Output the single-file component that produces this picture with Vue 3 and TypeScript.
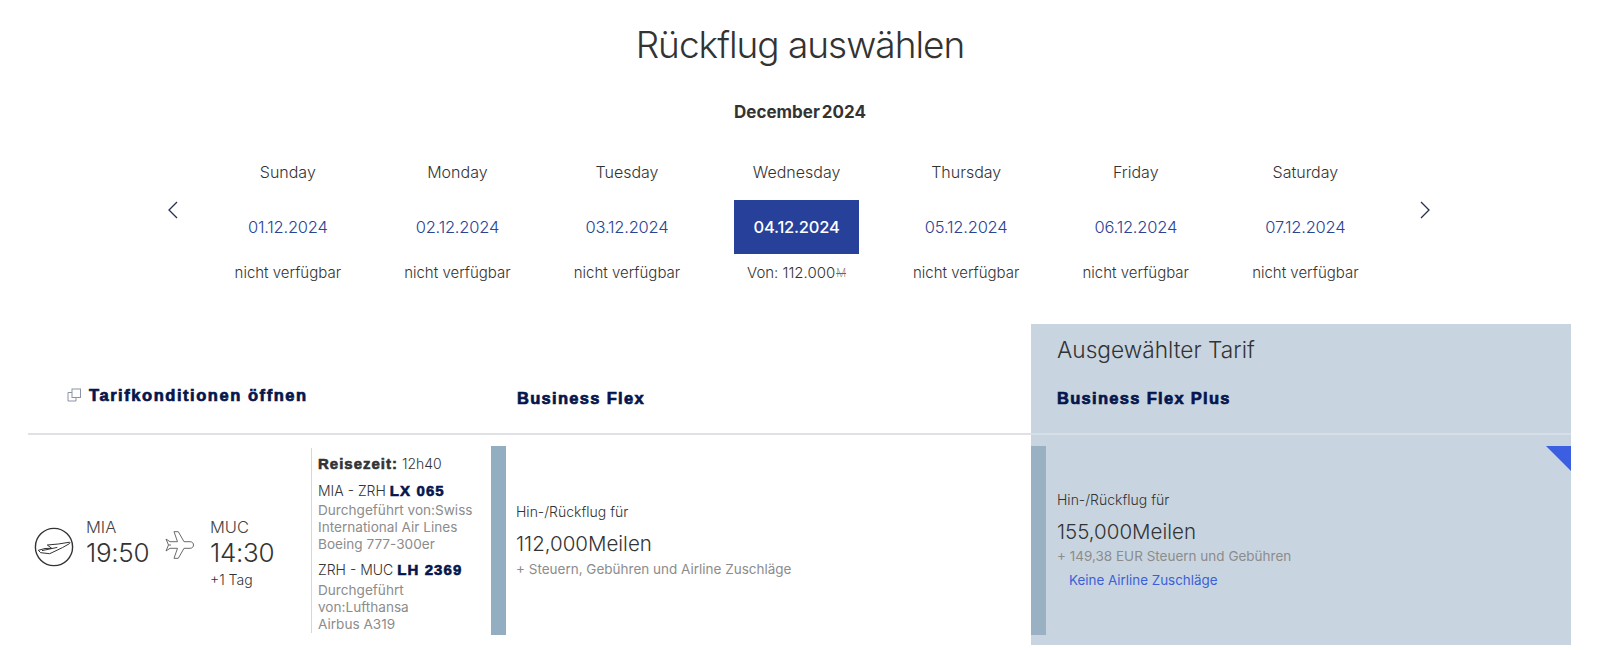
<script setup lang="ts">
interface Day { name: string; date: string; note: string; selected?: boolean }
const days: Day[] = [
  { name: 'Sunday', date: '01.12.2024', note: 'nicht verfügbar' },
  { name: 'Monday', date: '02.12.2024', note: 'nicht verfügbar' },
  { name: 'Tuesday', date: '03.12.2024', note: 'nicht verfügbar' },
  { name: 'Wednesday', date: '04.12.2024', note: 'Von: 112.000', selected: true },
  { name: 'Thursday', date: '05.12.2024', note: 'nicht verfügbar' },
  { name: 'Friday', date: '06.12.2024', note: 'nicht verfügbar' },
  { name: 'Saturday', date: '07.12.2024', note: 'nicht verfügbar' },
]
</script>

<template>
  <div class="page">
    <h1 class="title">Rückflug auswählen</h1>
    <div class="month">December 2024</div>

    <div class="calendar">
      <div class="arrow arrow-left">
        <svg width="16" height="20" viewBox="0 0 16 20"><path d="M12 2 L4 10 L12 18" fill="none" stroke="#26304f" stroke-width="1.3" /></svg>
      </div>
      <div v-for="d in days" :key="d.date" class="day">
        <div class="day-name">{{ d.name }}</div>
        <div class="day-date" :class="{ selected: d.selected }">{{ d.date }}</div>
        <div class="day-note">{{ d.note }}<span v-if="d.selected" class="mile">M</span></div>
      </div>
      <div class="arrow arrow-right">
        <svg width="16" height="20" viewBox="0 0 16 20"><path d="M4 2 L12 10 L4 18" fill="none" stroke="#26304f" stroke-width="1.3" /></svg>
      </div>
    </div>

    <div class="fares">
      <div class="head head-left">
        <svg class="copy" width="15" height="14" viewBox="0 0 15 14">
          <path d="M5 4.5 H1 V13 H9 V9.5" fill="none" stroke="#8c93a6" stroke-width="1" />
          <rect x="5" y="1" width="8.5" height="8.5" fill="#fff" stroke="#8c93a6" stroke-width="1" />
        </svg>
        <span class="heavy">Tarifkonditionen öffnen</span>
      </div>
      <div class="head head-mid"><span class="heavy">Business Flex</span></div>
      <div class="head head-sel">
        <div class="sel-label">Ausgewählter Tarif</div>
        <span class="heavy">Business Flex Plus</span>
      </div>

      <div class="flight">
        <div class="route">
          <svg class="logo" width="40" height="40" viewBox="0 0 40 40">
            <circle cx="20" cy="20" r="18.6" fill="none" stroke="#333" stroke-width="1.4" />
            <path d="M35.7 15.2 C36.4 15.6 36 16.4 35 16.9 L28.3 20.7 L15.7 26.7 L6.7 25.7 L4.3 23.3 L11 21.5 L17.7 21.3 L13.3 18 L24.3 17 Z M8 23.6 L23.3 20.4" fill="none" stroke="#333" stroke-width="1" stroke-linejoin="round" />
          </svg>
          <div class="port first">
            <div class="code">MIA</div>
            <div class="time">19:50</div>
          </div>
          <svg class="plane" width="30" height="28" viewBox="6 6 30 28">
            <path d="M25 16.7 L19.3 6.7 H15 L18.5 16.7 H11 L7 14 L9.5 20 L7 26 L11 23.3 H18.5 L15 33.3 H19.3 L25 23.3 H31 C33.5 23.3 34.5 21.5 34.5 20 C34.5 18.5 33.5 16.7 31 16.7 Z M9.5 20 H12" fill="#fff" stroke="#6a6a6a" stroke-width="1" stroke-linejoin="round" />
          </svg>
          <div class="port">
            <div class="code">MUC</div>
            <div class="time">14:30</div>
            <div class="plus">+1 Tag</div>
          </div>
        </div>
        <div class="details">
          <div class="line"><b class="heavy-dark">Reisezeit:</b> 12h40</div>
          <div class="leg"><span>MIA - ZRH</span> <b class="heavy-small">LX 065</b></div>
          <div class="op">Durchgeführt von:Swiss<br />International Air Lines<br />Boeing 777-300er</div>
          <div class="leg second"><span>ZRH - MUC</span> <b class="heavy-small">LH 2369</b></div>
          <div class="op last">Durchgeführt<br />von:Lufthansa<br />Airbus A319</div>
        </div>
      </div>

      <div class="fare">
        <div class="bar"></div>
        <div class="fare-body">
          <div class="fare-top">Hin-/Rückflug für</div>
          <div class="fare-miles">112,000Meilen</div>
          <div class="fare-sub">+ Steuern, Gebühren und Airline Zuschläge</div>
        </div>
      </div>

      <div class="fare fare-sel">
        <div class="bar"></div>
        <div class="fare-body up">
          <div class="fare-top">Hin-/Rückflug für</div>
          <div class="fare-miles">155,000Meilen</div>
          <div class="fare-sub tight">+ 149,38 EUR Steuern und Gebühren</div>
          <div class="fare-link">Keine Airline Zuschläge</div>
        </div>
        <div class="corner"></div>
      </div>
    </div>
  </div>
</template>

<style>
html, body { margin: 0; background: #fff; }
</style>

<style scoped>
.page {
  width: 1600px;
  height: 650px;
  overflow: hidden;
  font-family: Inter, "Liberation Sans", sans-serif;
  color: #333;
  padding-top: 20px;
  box-sizing: border-box;
}
.title {
  margin: 0;
  height: 50px;
  line-height: 50px;
  text-align: center;
  font-size: 37px;
  font-weight: 300;
  letter-spacing: -1px;
  color: #333;
}
.month {
  margin-top: 32px;
  height: 20px;
  line-height: 20px;
  text-align: center;
  font-size: 17px;
  font-weight: 700;
  word-spacing: -2px;
  letter-spacing: 0;
  color: #333;
}
.calendar {
  display: flex;
  margin-top: 40px;
  padding-left: 165px;
}
.arrow { width: 38px; margin-top: 38px; flex: none; }
.arrow-right { margin-left: 27px; }
.day { width: 169.6px; flex: none; display: flex; flex-direction: column; align-items: center; }
.day-name { height: 20px; line-height: 20px; font-size: 16px; font-weight: 300; color: #333; }
.day-date {
  margin-top: 18px;
  width: 125px;
  height: 54px;
  line-height: 54px;
  text-align: center;
  font-size: 16.5px;
  font-weight: 300;
  letter-spacing: -0.2px;
  color: #2a4494;
}
.day-date.selected { background: #27409a; color: #fff; font-weight: 500; }
.day-note { margin-top: 9px; height: 20px; line-height: 20px; font-size: 15px; font-weight: 300; color: #333; }
.mile { font-size: 11px; font-weight: 200; color: #666; vertical-align: 1px; margin-left: 1px; text-decoration: line-through; }

.fares {
  margin-top: 41px;
  margin-left: 28px;
  width: 1543px;
  display: grid;
  grid-template-columns: 463px 540px 540px;
  grid-template-rows: 111px 210px;
}
.head { border-bottom: 2px solid #dfe1e5; box-sizing: border-box; position: relative; }
.heavy {
  font-family: "Liberation Sans", sans-serif;
  font-weight: 700;
  font-size: 16.5px;
  letter-spacing: 1.3px;
  color: #05164d;
  -webkit-text-stroke: 0.7px #05164d;
}
.head-left { display: flex; align-items: flex-start; padding: 62px 0 0 39px; }
.head-left .heavy { letter-spacing: 1.55px; }
.copy { margin: 2px 7px 0 0; flex: none; }
.head-mid { padding: 64px 0 0 26px; }
.head-sel { background: #c8d5e0; padding: 13px 0 0 26px; border-bottom-color: #d6dfe7; }
.sel-label { font-size: 22.7px; line-height: 26px; font-weight: 300; color: #333; margin-bottom: 25px; }

.flight { display: flex; padding-top: 13px; box-sizing: border-box; }
.route { width: 283px; flex: none; display: flex; align-items: flex-start; padding-top: 69px; box-sizing: border-box; }
.logo { margin: 10px 12px 0 6px; flex: none; }
.port { width: 80px; flex: none; }
.port.first { width: 79px; }
.code { font-size: 16.5px; line-height: 20px; font-weight: 300; color: #444; }
.time { font-size: 26px; line-height: 32px; font-weight: 300; color: #333; letter-spacing: -0.3px; }
.plus { font-size: 14px; line-height: 18px; font-weight: 300; color: #333; margin-top: 2px; }
.plane { flex: none; margin: 14px 15px 0 0; }
.details { border-left: 1.5px solid #d5d7da; padding-left: 6px; height: 185px; font-size: 14px; line-height: 17px; font-weight: 300; }
.line { height: 17px; margin-top: 7px; }
.heavy-dark { font-family: "Liberation Sans", sans-serif; font-weight: 700; font-size: 15px; letter-spacing: 1px; color: #333; -webkit-text-stroke: 0.6px #333; }
.heavy-small { font-family: "Liberation Sans", sans-serif; font-weight: 700; font-size: 15px; letter-spacing: 1.1px; color: #05164d; -webkit-text-stroke: 0.6px #05164d; }
.leg { margin-top: 10px; height: 17px; color: #333; }
.leg.second { margin-top: 8px; }
.op { margin-top: 3px; color: #8c8c8c; font-weight: 400; font-size: 13.6px; }
.op.last { margin-top: 4px; }

.fare { display: flex; padding-top: 11px; height: 210px; box-sizing: border-box; position: relative; }
.bar { width: 15px; height: 189px; background: #93aec1; flex: none; }
.fare-body { padding: 57px 0 0 10px; }
.fare-body.up { padding-top: 45px; padding-left: 11px; }
.fare-top { font-size: 14px; line-height: 18px; font-weight: 300; color: #333; }
.fare-miles { font-size: 20.5px; line-height: 26px; font-weight: 300; color: #333; margin-top: 10px; }
.fare-sub { font-size: 13.5px; line-height: 18px; color: #8c8c8c; font-weight: 400; margin-top: 3px; }
.fare-sub.tight { margin-top: 2px; }
.fare-link { font-size: 13.4px; line-height: 18px; color: #3b5fd8; margin-top: 6px; margin-left: 12px; }
.fare-sel { background: #c8d5e0; height: 210px; }
.fare-sel .bar { background: #99b1c2; }
.corner {
  position: absolute;
  top: 11px;
  right: 0;
  width: 0;
  height: 0;
  border-top: 25px solid #3b5fe0;
  border-left: 25px solid transparent;
}
</style>
